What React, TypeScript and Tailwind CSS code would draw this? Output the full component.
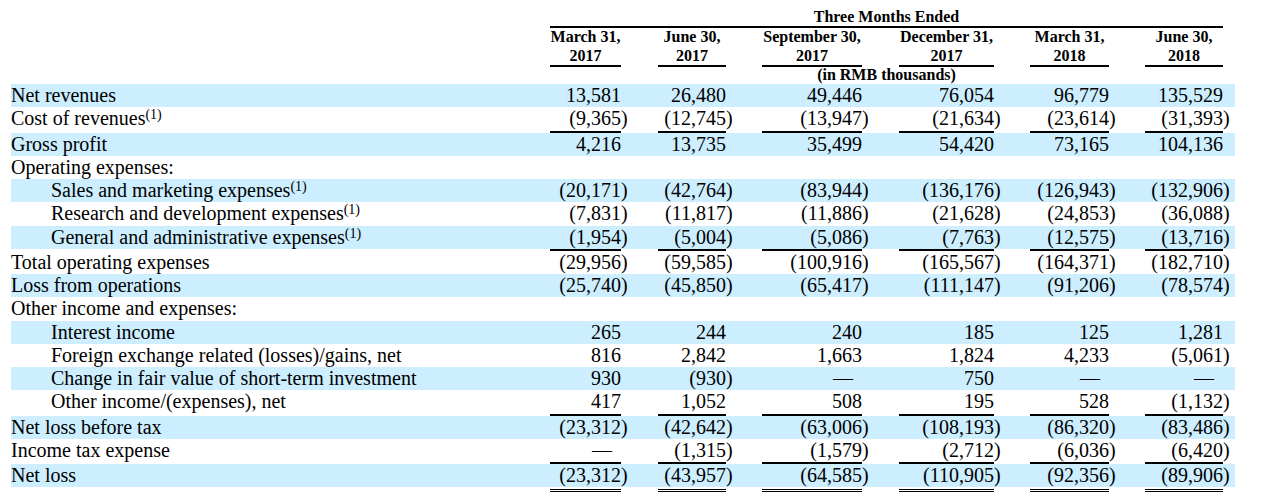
type Row = {
  label: string;
  values?: string[];
  sup?: boolean;
  indent?: boolean;
  blue?: boolean;
  rule?: "single" | "double";
};

// column geometry: number cell, trailing paren cell, gap to next column
const cols = [
  { cell: "w-[108px]", num: "w-[71px]" },
  { cell: "w-[104px]", num: "w-[68px]" },
  { cell: "w-[137px]", num: "w-[100px]" },
  { cell: "w-[131px]", num: "w-[95px]" },
  { cell: "w-[115px]", num: "w-[79px]" },
  { cell: "w-[90px]", num: "w-[78px]" },
];

const headers = [
  ["March 31,", "2017"],
  ["June 30,", "2017"],
  ["September 30,", "2017"],
  ["December 31,", "2017"],
  ["March 31,", "2018"],
  ["June 30,", "2018"],
];

const rows: Row[] = [
  { label: "Net revenues", blue: true, values: ["13,581", "26,480", "49,446", "76,054", "96,779", "135,529"] },
  { label: "Cost of revenues", sup: true, rule: "single", values: ["(9,365)", "(12,745)", "(13,947)", "(21,634)", "(23,614)", "(31,393)"] },
  { label: "Gross profit", blue: true, values: ["4,216", "13,735", "35,499", "54,420", "73,165", "104,136"] },
  { label: "Operating expenses:" },
  { label: "Sales and marketing expenses", sup: true, indent: true, blue: true, values: ["(20,171)", "(42,764)", "(83,944)", "(136,176)", "(126,943)", "(132,906)"] },
  { label: "Research and development expenses", sup: true, indent: true, values: ["(7,831)", "(11,817)", "(11,886)", "(21,628)", "(24,853)", "(36,088)"] },
  { label: "General and administrative expenses", sup: true, indent: true, blue: true, rule: "single", values: ["(1,954)", "(5,004)", "(5,086)", "(7,763)", "(12,575)", "(13,716)"] },
  { label: "Total operating expenses", values: ["(29,956)", "(59,585)", "(100,916)", "(165,567)", "(164,371)", "(182,710)"] },
  { label: "Loss from operations", blue: true, values: ["(25,740)", "(45,850)", "(65,417)", "(111,147)", "(91,206)", "(78,574)"] },
  { label: "Other income and expenses:" },
  { label: "Interest income", indent: true, blue: true, values: ["265", "244", "240", "185", "125", "1,281"] },
  { label: "Foreign exchange related (losses)/gains, net", indent: true, values: ["816", "2,842", "1,663", "1,824", "4,233", "(5,061)"] },
  { label: "Change in fair value of short-term investment", indent: true, blue: true, values: ["930", "(930)", "—", "750", "—", "—"] },
  { label: "Other income/(expenses), net", indent: true, rule: "single", values: ["417", "1,052", "508", "195", "528", "(1,132)"] },
  { label: "Net loss before tax", blue: true, values: ["(23,312)", "(42,642)", "(63,006)", "(108,193)", "(86,320)", "(83,486)"] },
  { label: "Income tax expense", rule: "single", values: ["—", "(1,315)", "(1,579)", "(2,712)", "(6,036)", "(6,420)"] },
  { label: "Net loss", blue: true, rule: "double", values: ["(23,312)", "(43,957)", "(64,585)", "(110,905)", "(92,356)", "(89,906)"] },
];

function Value({ v, num }: { v: string; num: string }) {
  if (v === "—") {
    return (
      <div className="flex">
        <div className={`${num} text-right pr-[9px]`}>—</div>
      </div>
    );
  }
  const neg = v.endsWith(")");
  return (
    <div className="flex">
      <div className={`${num} text-right`}>{neg ? v.slice(0, -1) : v}</div>
      <div>{neg ? ")" : ""}</div>
    </div>
  );
}

function Rule({ kind }: { kind: "single" | "double" }) {
  return (
    <div className={kind === "double" ? "flex pt-[2px]" : "flex"}>
      <div className="w-[539px]" />
      {cols.map((c, i) => (
        <div key={i} className={c.cell}>
          <div
            className={
              kind === "double"
                ? `${c.num} h-[3px] border-t-[3px] border-double border-black`
                : `${c.num} h-[2px] bg-black`
            }
          />
        </div>
      ))}
    </div>
  );
}

export default function App() {
  return (
    <div className="w-[1262px] h-[504px] bg-white text-black font-['Liberation_Serif','Times_New_Roman',serif] pl-[11px] overflow-hidden">
      {/* header */}
      <div className="pt-[8px] text-[16px] font-bold">
        <div className="flex">
          <div className="w-[539px]" />
          <div className="w-[673px] h-[20px] leading-[18px] text-center border-b-2 border-black">
            Three Months Ended
          </div>
        </div>
        <div className="flex">
          <div className="w-[539px]" />
          {cols.map((c, i) => (
            <div key={i} className={c.cell}>
              <div className={`${c.num} text-center leading-[18.5px] border-b-2 border-black`}>
                <div>{headers[i][0]}</div>
                <div>{headers[i][1]}</div>
              </div>
            </div>
          ))}
        </div>
        <div className="flex">
          <div className="w-[539px]" />
          <div className="w-[673px] h-[17px] leading-[15px] text-center">(in RMB thousands)</div>
        </div>
      </div>

      {/* body */}
      <div className="text-[20px]">
        {rows.map((r, i) => (
          <div key={i}>
            <div
              className={`flex h-[23.25px] leading-[23.25px] w-[1224px] ${r.blue ? "bg-[#cceeff]" : ""}`}
            >
              <div className={`w-[539px] whitespace-nowrap ${r.indent ? "pl-[40px]" : ""}`}>
                {r.label}
                {r.sup && <sup className="text-[14px] -top-[6px]">(1)</sup>}
              </div>
              {r.values &&
                cols.map((c, j) => (
                  <div key={j} className={c.cell}>
                    <Value v={r.values![j]} num={c.num} />
                  </div>
                ))}
            </div>
            {r.rule && <Rule kind={r.rule} />}
          </div>
        ))}
      </div>
    </div>
  );
}
